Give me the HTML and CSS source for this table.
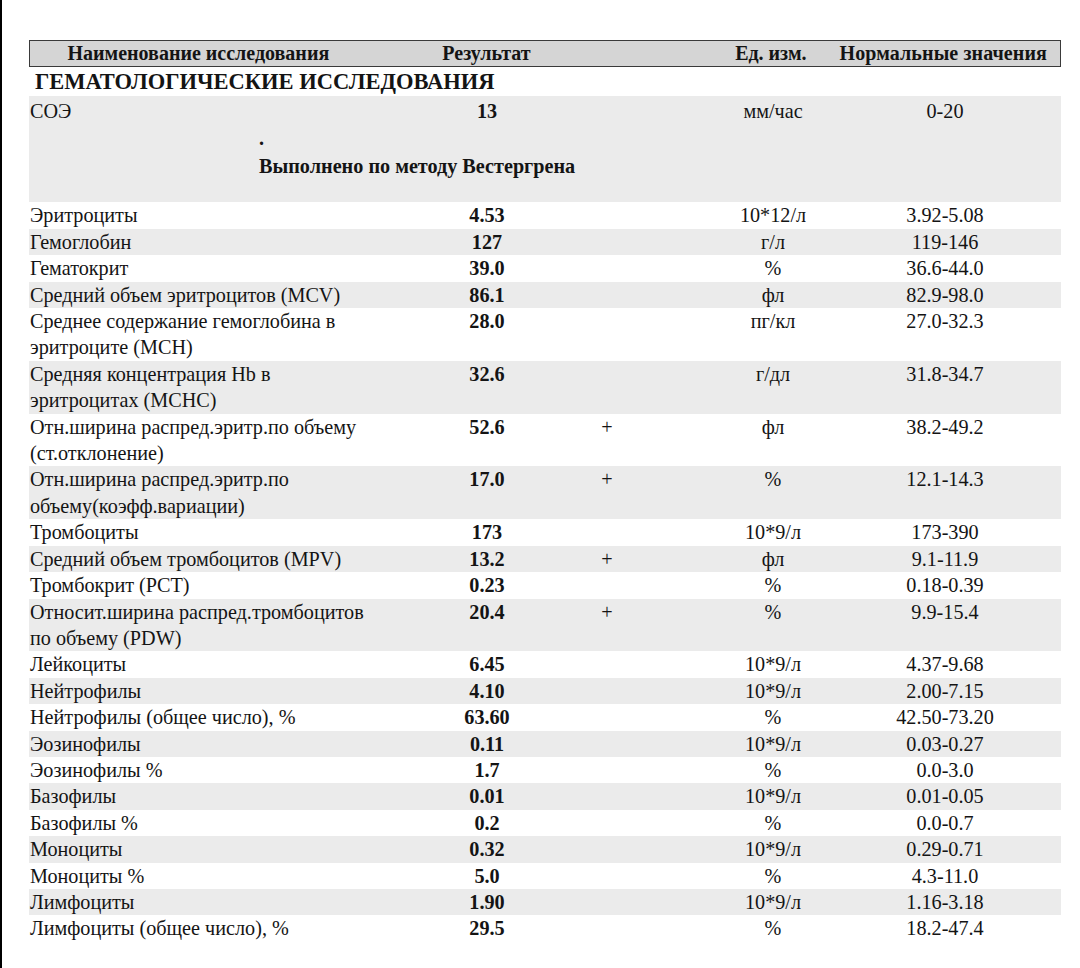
FILE: index.html
```html
<!DOCTYPE html>
<html lang="ru">
<head>
<meta charset="utf-8">
<link rel="stylesheet" href="styles.css">
</head>
<body>
<div class="page">
  <div class="report">
    <div class="head">
      <div class="h-name">Наименование исследования</div>
      <div class="h-res">Результат</div>
      <div class="h-flag"></div>
      <div class="h-unit">Ед. изм.</div>
      <div class="h-norm">Нормальные значения</div>
    </div>
    <div class="section">ГЕМАТОЛОГИЧЕСКИЕ ИССЛЕДОВАНИЯ</div>
    <div class="body">
      <div class="row gray soe">
        <div class="c-name">СОЭ</div>
        <div class="c-res">13</div>
        <div class="c-flag"></div>
        <div class="c-unit">мм/час</div>
        <div class="c-norm">0-20</div>
        <div class="method">
          <div class="dot">.</div>
          <div class="method-text">Выполнено по методу Вестергрена</div>
        </div>
      </div>
      <div class="row"><div class="c-name">Эритроциты</div><div class="c-res">4.53</div><div class="c-flag"></div><div class="c-unit">10*12/л</div><div class="c-norm">3.92-5.08</div></div>
      <div class="row gray"><div class="c-name">Гемоглобин</div><div class="c-res">127</div><div class="c-flag"></div><div class="c-unit">г/л</div><div class="c-norm">119-146</div></div>
      <div class="row"><div class="c-name">Гематокрит</div><div class="c-res">39.0</div><div class="c-flag"></div><div class="c-unit">%</div><div class="c-norm">36.6-44.0</div></div>
      <div class="row gray"><div class="c-name">Средний объем эритроцитов (MCV)</div><div class="c-res">86.1</div><div class="c-flag"></div><div class="c-unit">фл</div><div class="c-norm">82.9-98.0</div></div>
      <div class="row"><div class="c-name">Среднее содержание гемоглобина в<br>эритроците (MCH)</div><div class="c-res">28.0</div><div class="c-flag"></div><div class="c-unit">пг/кл</div><div class="c-norm">27.0-32.3</div></div>
      <div class="row gray"><div class="c-name">Средняя концентрация Hb в<br>эритроцитах (MCHC)</div><div class="c-res">32.6</div><div class="c-flag"></div><div class="c-unit">г/дл</div><div class="c-norm">31.8-34.7</div></div>
      <div class="row"><div class="c-name">Отн.ширина распред.эритр.по объему<br>(ст.отклонение)</div><div class="c-res">52.6</div><div class="c-flag">+</div><div class="c-unit">фл</div><div class="c-norm">38.2-49.2</div></div>
      <div class="row gray"><div class="c-name">Отн.ширина распред.эритр.по<br>объему(коэфф.вариации)</div><div class="c-res">17.0</div><div class="c-flag">+</div><div class="c-unit">%</div><div class="c-norm">12.1-14.3</div></div>
      <div class="row"><div class="c-name">Тромбоциты</div><div class="c-res">173</div><div class="c-flag"></div><div class="c-unit">10*9/л</div><div class="c-norm">173-390</div></div>
      <div class="row gray"><div class="c-name">Средний объем тромбоцитов (MPV)</div><div class="c-res">13.2</div><div class="c-flag">+</div><div class="c-unit">фл</div><div class="c-norm">9.1-11.9</div></div>
      <div class="row"><div class="c-name">Тромбокрит (PCT)</div><div class="c-res">0.23</div><div class="c-flag"></div><div class="c-unit">%</div><div class="c-norm">0.18-0.39</div></div>
      <div class="row gray"><div class="c-name">Относит.ширина распред.тромбоцитов<br>по объему (PDW)</div><div class="c-res">20.4</div><div class="c-flag">+</div><div class="c-unit">%</div><div class="c-norm">9.9-15.4</div></div>
      <div class="row"><div class="c-name">Лейкоциты</div><div class="c-res">6.45</div><div class="c-flag"></div><div class="c-unit">10*9/л</div><div class="c-norm">4.37-9.68</div></div>
      <div class="row gray"><div class="c-name">Нейтрофилы</div><div class="c-res">4.10</div><div class="c-flag"></div><div class="c-unit">10*9/л</div><div class="c-norm">2.00-7.15</div></div>
      <div class="row"><div class="c-name">Нейтрофилы (общее число), %</div><div class="c-res">63.60</div><div class="c-flag"></div><div class="c-unit">%</div><div class="c-norm">42.50-73.20</div></div>
      <div class="row gray"><div class="c-name">Эозинофилы</div><div class="c-res">0.11</div><div class="c-flag"></div><div class="c-unit">10*9/л</div><div class="c-norm">0.03-0.27</div></div>
      <div class="row"><div class="c-name">Эозинофилы %</div><div class="c-res">1.7</div><div class="c-flag"></div><div class="c-unit">%</div><div class="c-norm">0.0-3.0</div></div>
      <div class="row gray"><div class="c-name">Базофилы</div><div class="c-res">0.01</div><div class="c-flag"></div><div class="c-unit">10*9/л</div><div class="c-norm">0.01-0.05</div></div>
      <div class="row"><div class="c-name">Базофилы %</div><div class="c-res">0.2</div><div class="c-flag"></div><div class="c-unit">%</div><div class="c-norm">0.0-0.7</div></div>
      <div class="row gray"><div class="c-name">Моноциты</div><div class="c-res">0.32</div><div class="c-flag"></div><div class="c-unit">10*9/л</div><div class="c-norm">0.29-0.71</div></div>
      <div class="row"><div class="c-name">Моноциты %</div><div class="c-res">5.0</div><div class="c-flag"></div><div class="c-unit">%</div><div class="c-norm">4.3-11.0</div></div>
      <div class="row gray"><div class="c-name">Лимфоциты</div><div class="c-res">1.90</div><div class="c-flag"></div><div class="c-unit">10*9/л</div><div class="c-norm">1.16-3.18</div></div>
      <div class="row"><div class="c-name">Лимфоциты (общее число), %</div><div class="c-res">29.5</div><div class="c-flag"></div><div class="c-unit">%</div><div class="c-norm">18.2-47.4</div></div>
    </div>
  </div>
</div>
</body>
</html>
```
FILE: styles.css
```css
html, body {
  margin: 0;
  padding: 0;
  background: #ffffff;
}
body {
  font-family: "Liberation Serif", Tinos, "Times New Roman", Times, "DejaVu Serif", serif;
  color: #141414;
}
.page {
  box-sizing: border-box;
  width: 1080px;
  height: 968px;
  border-left: 2px solid #000;
  padding: 40px 0 0 27px;
  overflow: hidden;
}
.report {
  width: 1032px;
}
.row {
  display: grid;
  grid-template-columns: 411px 94px 146px 186px 158px 37px;
  font-size: 20.2px;
  line-height: 26.4px;
}
.row > div { white-space: nowrap; }
.c-name { padding-left: 1px; }
.c-res { text-align: center; font-weight: bold; }
.c-flag { text-align: center; }
.c-unit { text-align: center; }
.c-norm { text-align: center; }
.gray { background: #ebebeb; }

.head {
  box-sizing: border-box;
  display: grid;
  grid-template-columns: 409.5px 94px 146px 150px 229.5px;
  height: 27px;
  border: 1.5px solid #3a3a3a;
  background: #d5d5d5;
  font-size: 20px;
  font-weight: bold;
  line-height: 24px;
  white-space: nowrap;
}
.h-name { padding-left: 37.5px; }
.h-res { text-align: center; }
.h-unit { text-align: right; padding-right: 23px; }
.h-norm { text-align: center; padding-right: 2px; letter-spacing: 0.1px; }

.section {
  font-weight: bold;
  font-size: 22.5px;
  line-height: 29px;
  padding-left: 6px;
}

.soe {
  padding-top: 2px;
  padding-bottom: 23px;
}
.method {
  grid-column: 1 / -1;
  padding-left: 230px;
}
.dot {
  font-weight: bold;
  line-height: 28px;
  height: 29px;
}
.method-text {
  font-weight: bold;
  line-height: 26px;
}
```
